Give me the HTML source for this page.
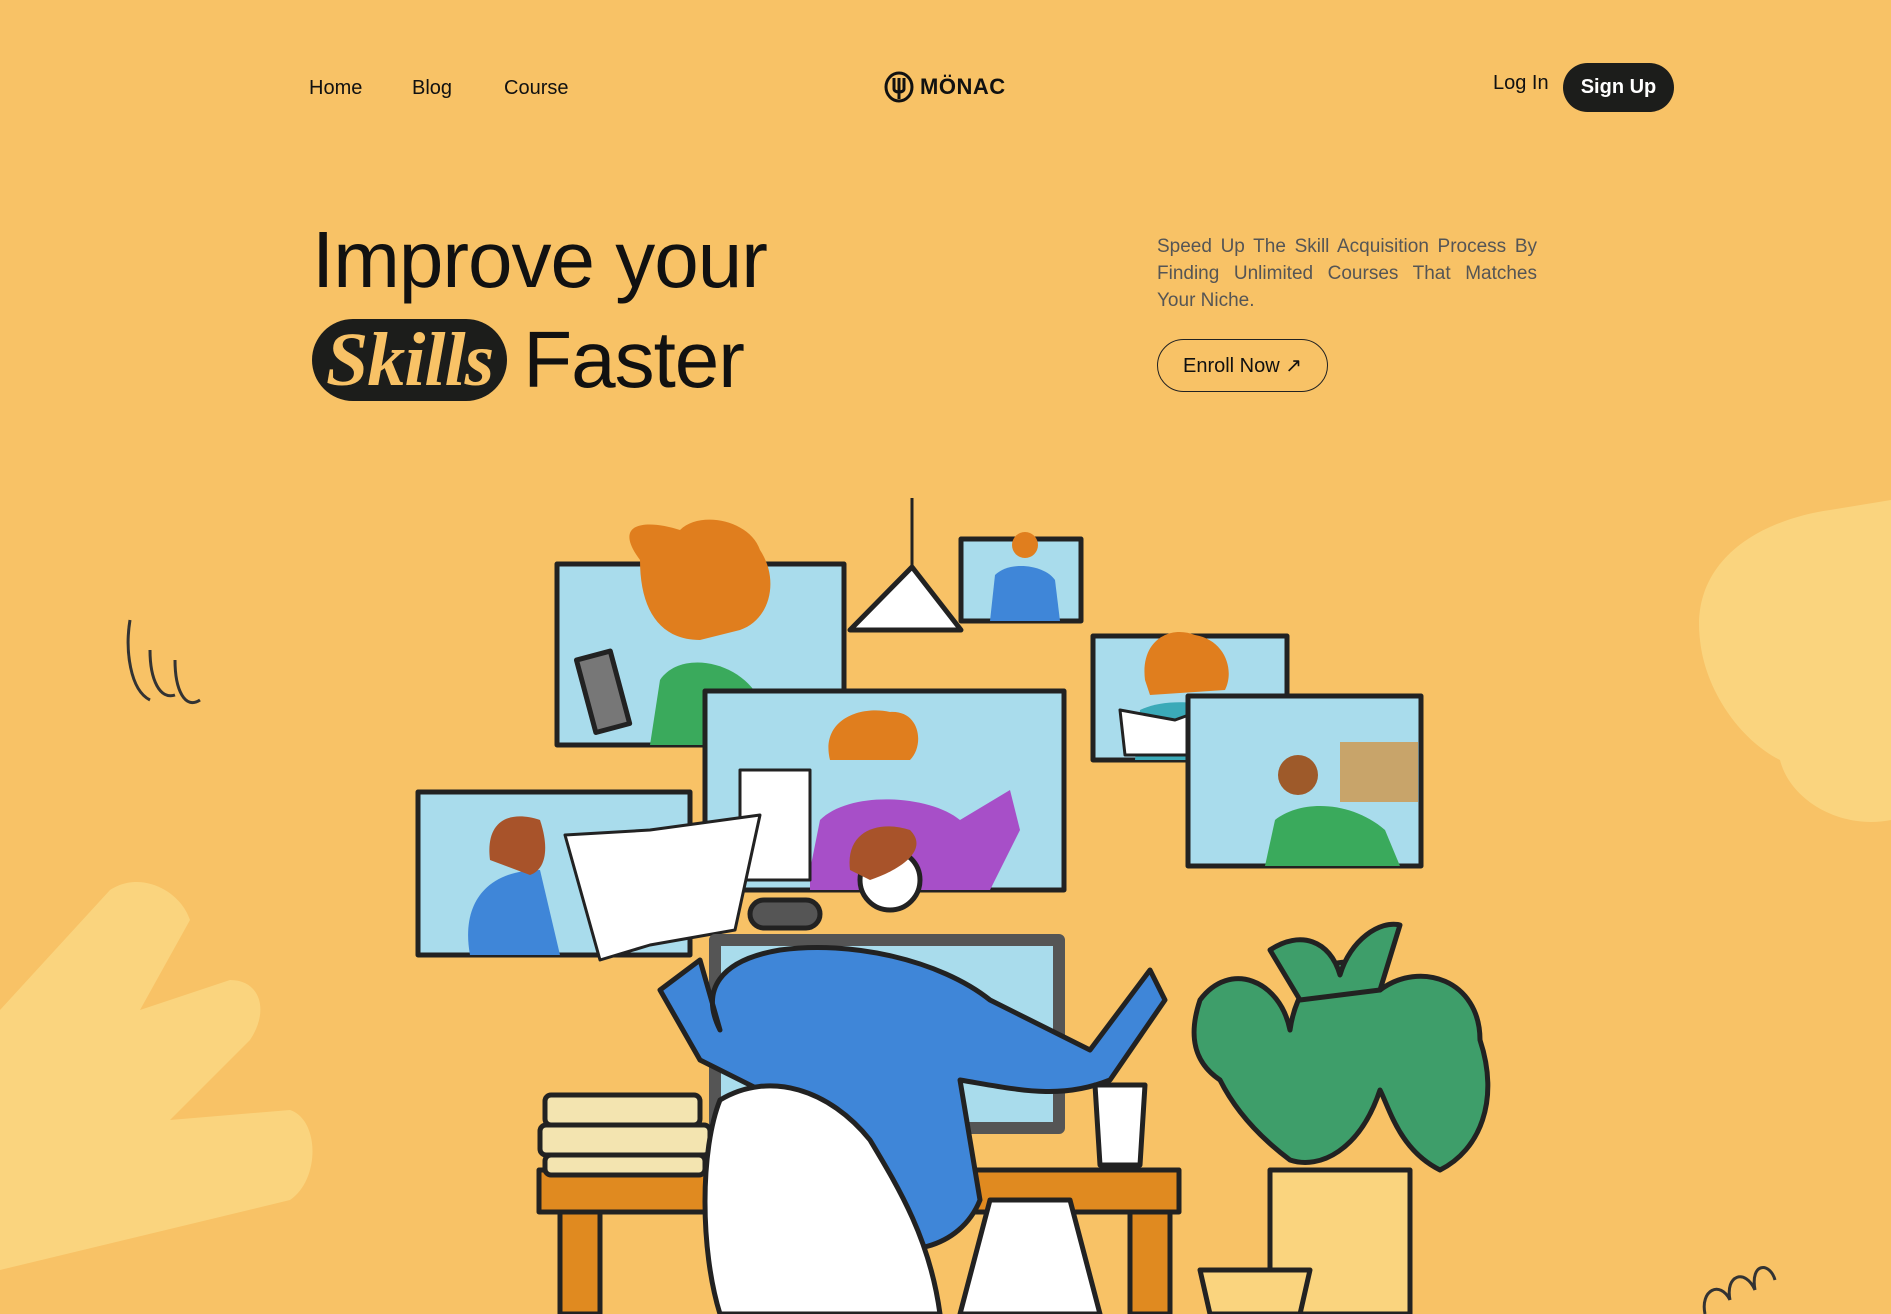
<!DOCTYPE html>
<html><head><meta charset="utf-8"><style>
*{margin:0;padding:0;box-sizing:border-box}
body{width:1891px;height:1314px;overflow:hidden;background:#F8C266;font-family:"Liberation Sans",sans-serif;color:#111;position:relative}
.nav a{position:absolute;top:77px;font-size:20px;color:#111;text-decoration:none}
.logo{position:absolute;left:884px;top:71px;display:flex;align-items:center;gap:6px;font-weight:bold;font-size:22px;letter-spacing:0.5px}
.login{position:absolute;left:1493px;top:72px;font-size:20px}
.signup{position:absolute;left:1563px;top:63px;width:111px;height:49px;border-radius:25px;background:#1c1d1b;color:#fff;font-size:20px;font-weight:bold;display:flex;align-items:center;justify-content:center}
h1{position:absolute;left:312px;top:210px;font-weight:normal;font-size:80px;line-height:100px;letter-spacing:-1px}
.pill{display:inline-block;background:#1c1d1b;color:#F8C266;font-family:"Liberation Serif",serif;font-style:italic;font-weight:bold;border-radius:42px;height:82px;line-height:82px;padding:0 14px;font-size:76px;vertical-align:middle;margin-right:16px;position:relative;top:-6px}
.para{position:absolute;left:1157px;top:233px;width:380px;font-size:19px;line-height:27px;color:#555;text-align:justify}
.enroll{position:absolute;left:1157px;top:339px;width:171px;height:53px;border:1.5px solid #222;border-radius:27px;display:flex;align-items:center;justify-content:center;font-size:20px}
svg{position:absolute;left:0;top:0}
</style></head><body>
<svg width="1891" height="1314" viewBox="0 0 1891 1314">
<path d="M1700 640 C1690 560 1760 520 1830 510 L1891 500 L1891 820 C1840 830 1790 800 1780 760 C1740 740 1705 690 1700 640Z" fill="#FAD47E"/>
<path d="M0 1010 L110 890 C140 870 180 890 190 920 L140 1010 L230 980 C260 980 270 1010 250 1040 L170 1120 L290 1110 C320 1120 320 1180 290 1200 L0 1270Z" fill="#FAD47E"/>
<path d="M130 620 C125 650 130 690 150 700 M150 650 C150 680 160 700 175 695 M175 660 C175 690 185 710 200 700" stroke="#333" stroke-width="3" fill="none"/>
<path d="M1705 1314 C1700 1290 1720 1280 1730 1300 M1730 1300 C1725 1275 1745 1268 1755 1290 M1755 1290 C1750 1262 1770 1262 1775 1280" stroke="#333" stroke-width="3" fill="none"/>
<g stroke="#222" stroke-width="5" stroke-linejoin="round">
<line x1="912" y1="498" x2="912" y2="567" stroke-width="3"/>
<path d="M912 567 L961 630 L850 630Z" fill="#fff"/>
<rect x="557" y="564" width="287" height="181" fill="#A9DCEC"/>
<path d="M640 560 C610 520 650 520 680 530 C700 510 750 520 760 550 C780 580 770 620 740 630 L700 640 C660 640 640 610 640 560Z" fill="#E07E1E" stroke="none"/>
<path d="M650 745 L660 680 C680 650 740 660 760 700 L765 745Z" fill="#3AAA5C" stroke="none"/>
<rect x="585" y="655" width="35" height="75" fill="#777" transform="rotate(-15 600 690)"/>
<rect x="961" y="539" width="120" height="82" fill="#A9DCEC"/>
<path d="M990 621 L995 575 C1010 560 1045 565 1055 580 L1060 621Z" fill="#3F86D8" stroke="none"/>
<circle cx="1025" cy="545" r="13" fill="#E07E1E" stroke="none"/>
<rect x="1093" y="636" width="194" height="124" fill="#A9DCEC"/>
<path d="M1145 680 C1140 640 1170 625 1195 635 C1225 640 1235 670 1225 690 L1150 695Z" fill="#E07E1E" stroke="none"/>
<path d="M1135 760 L1140 710 C1170 695 1240 700 1260 740 L1265 760Z" fill="#3BAAB8" stroke="none"/>
<path d="M1120 710 L1175 720 L1230 700 L1235 755 L1125 755Z" fill="#fff" stroke-width="3"/>
<rect x="1188" y="696" width="233" height="170" fill="#A9DCEC"/>
<path d="M1265 866 L1275 820 C1300 800 1350 800 1385 830 L1400 866Z" fill="#3AAA5C" stroke="none"/>
<circle cx="1298" cy="775" r="20" fill="#9E5A2A" stroke="none"/>
<rect x="1340" y="742" width="78" height="60" fill="#C8A46A" stroke="none"/>
<rect x="705" y="691" width="359" height="199" fill="#A9DCEC"/>
<path d="M810 870 L820 820 C850 790 930 795 960 820 L1010 790 L1020 830 L990 890 L810 890Z" fill="#A74FC8" stroke="none"/>
<path d="M830 760 C820 720 860 705 890 712 C920 710 925 745 910 760Z" fill="#E07E1E" stroke="none"/>
<rect x="740" y="770" width="70" height="110" fill="#fff" stroke-width="3"/>
<rect x="418" y="792" width="272" height="163" fill="#A9DCEC"/>
<path d="M470 955 C460 900 490 870 540 870 L560 955Z" fill="#3F86D8" stroke="none"/>
<path d="M490 860 C485 820 510 810 540 820 C550 850 545 870 530 875Z" fill="#A8532A" stroke="none"/>
<path d="M565 835 L650 830 L760 815 L735 930 L650 945 L600 960Z" fill="#fff" stroke-width="3"/>
<rect x="715" y="940" width="344" height="188" fill="#A9DCEC" stroke="#555" stroke-width="12"/>
<rect x="750" y="900" width="70" height="28" rx="14" fill="#555"/>
<circle cx="890" cy="880" r="30" fill="#fff"/>
<path d="M850 870 C845 830 880 820 910 830 C930 850 900 870 870 880Z" fill="#A8532A" stroke="none"/>
<rect x="539" y="1170" width="640" height="42" fill="#E08A20"/>
<rect x="560" y="1212" width="40" height="102" fill="#E08A20"/>
<rect x="1130" y="1212" width="40" height="102" fill="#E08A20"/>
<rect x="545" y="1095" width="155" height="30" rx="6" fill="#F3E4B0"/>
<rect x="540" y="1125" width="170" height="30" rx="6" fill="#F3E4B0"/>
<rect x="545" y="1155" width="160" height="20" rx="6" fill="#F3E4B0"/>
<path d="M720 1030 C700 990 720 960 780 950 C850 940 940 960 990 1000 L1090 1050 L1150 970 L1165 1000 L1110 1080 C1060 1100 1020 1090 960 1080 L980 1200 C960 1250 900 1260 860 1240 L820 1120 L700 1060 L660 990 L700 960Z" fill="#3F86D8"/>
<path d="M720 1100 C770 1070 830 1090 870 1140 C900 1190 930 1240 940 1314 L720 1314 C700 1250 700 1150 720 1100Z" fill="#fff"/>
<path d="M990 1200 L1070 1200 L1100 1314 L960 1314Z" fill="#fff"/>
<path d="M1095 1085 L1145 1085 L1140 1165 L1100 1165Z" fill="#fff"/>
<path d="M1270 1170 L1410 1170 L1410 1314 L1270 1314Z" fill="#FAD47E"/>
<path d="M1200 1270 L1310 1270 L1300 1314 L1210 1314Z" fill="#FAD47E"/>
<path d="M1200 1000 C1230 960 1280 980 1290 1030 C1300 960 1360 940 1380 990 C1420 960 1480 980 1480 1040 C1500 1100 1480 1150 1440 1170 C1400 1150 1390 1110 1380 1090 C1360 1150 1320 1170 1290 1160 C1250 1130 1230 1100 1220 1080 C1190 1060 1190 1030 1200 1000Z" fill="#3E9E6A"/>
<path d="M1270 950 C1300 930 1330 940 1340 975 C1350 940 1380 920 1400 925 L1380 990 L1300 1000Z" fill="#3E9E6A"/>
</g>
</svg>
<div class="nav"><a style="left:309px">Home</a><a style="left:412px">Blog</a><a style="left:504px">Course</a></div>
<div class="logo"><svg style="position:static" width="30" height="32" viewBox="0 0 30 32"><ellipse cx="15" cy="16" rx="13" ry="14" fill="none" stroke="#111" stroke-width="3"/><path d="M10 7 L10 18 C10 22 20 22 20 18 L20 7 M15 7 L15 28" stroke="#111" stroke-width="3" fill="none"/></svg><span>MÖNAC</span></div>
<div class="login">Log In</div>
<div class="signup">Sign Up</div>
<h1>Improve your<br><span class="pill">Skills</span>Faster</h1>
<div class="para">Speed Up The Skill Acquisition Process By Finding Unlimited Courses That Matches Your Niche.</div>
<div class="enroll">Enroll Now ↗</div>
</body></html>
